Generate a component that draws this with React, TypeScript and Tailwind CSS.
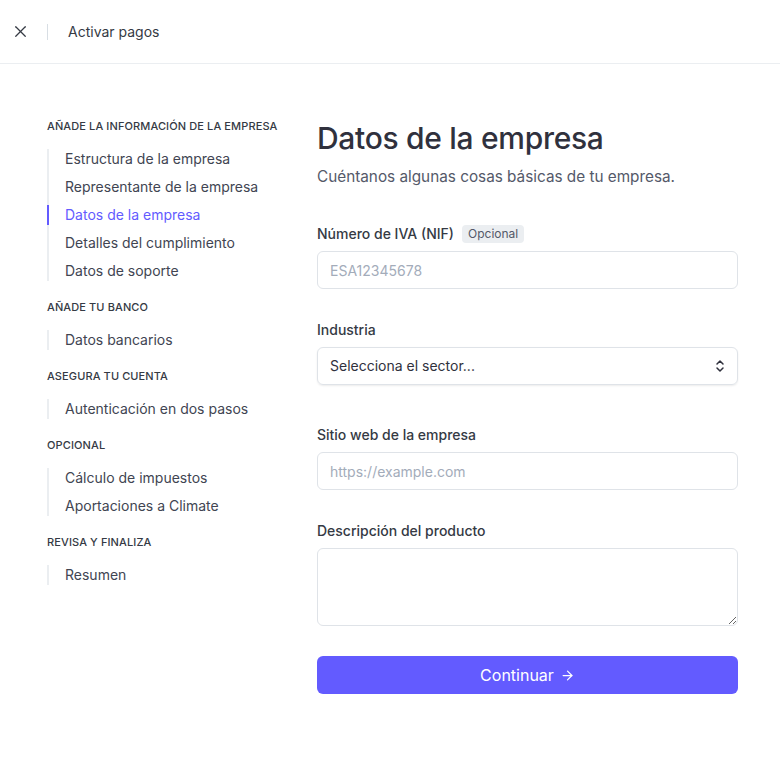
import { X, ArrowRight } from 'lucide-react'

type Section = { title: string; items: string[] }

const sections: Section[] = [
  {
    title: 'Añade la información de la empresa',
    items: [
      'Estructura de la empresa',
      'Representante de la empresa',
      'Datos de la empresa',
      'Detalles del cumplimiento',
      'Datos de soporte',
    ],
  },
  { title: 'Añade tu banco', items: ['Datos bancarios'] },
  { title: 'Asegura tu cuenta', items: ['Autenticación en dos pasos'] },
  { title: 'Opcional', items: ['Cálculo de impuestos', 'Aportaciones a Climate'] },
  { title: 'Revisa y finaliza', items: ['Resumen'] },
]

const active = 'Datos de la empresa'

function Sidebar() {
  return (
    <nav className="w-[270px] shrink-0 flex flex-col gap-[18px]">
      {sections.map((s) => (
        <div key={s.title}>
          <h3 className="text-[11px] leading-4 font-medium uppercase tracking-[0.01em] text-[#353a44]">
            {s.title}
          </h3>
          <ul className="mt-[15px] flex flex-col gap-2 border-l-2 border-[#ebeef1]">
            {s.items.map((item) => (
              <li
                key={item}
                className={
                  item === active
                    ? '-ml-[2px] border-l-2 border-[#635bff] pl-4 text-sm leading-5 text-[#635bff]'
                    : 'pl-4 text-sm leading-5 text-[#414552]'
                }
              >
                {item}
              </li>
            ))}
          </ul>
        </div>
      ))}
    </nav>
  )
}

function Label({ children }: { children: React.ReactNode }) {
  return <label className="flex items-center gap-2 text-sm leading-5 font-medium text-[#353a44]">{children}</label>
}

export default function App() {
  return (
    <div className="min-h-[774px] w-[780px] bg-white font-['Inter',sans-serif] text-[#30313d]">
      {/* cabecera */}
      <header className="h-16 flex items-center border-b border-[#ebeef1]">
        <div className="w-[47px] flex pl-[11px]">
          <X size={19} strokeWidth={1.6} className="text-[#353a44]" />
        </div>
        <div className="h-4 w-px bg-[#d8dee4]" />
        <span className="ml-5 text-sm text-[#353a44]">Activar pagos</span>
      </header>

      <div className="flex pl-[47px] pt-[54px]">
        <Sidebar />

        {/* formulario */}
        <main className="w-[421px] mt-[2px]">
          <h1 className="text-[30px] leading-9 font-medium text-[#30313d] tracking-[-0.01em]">Datos de la empresa</h1>
          <p className="mt-[9px] text-[15.3px] leading-6 text-[#545969]">Cuéntanos algunas cosas básicas de tu empresa.</p>

          <div className="mt-[35px]">
            <Label>
              Número de IVA (NIF)
              <span className="rounded bg-[#ebeef1] px-1.5 text-xs leading-[18px] font-normal text-[#545969]">Opcional</span>
            </Label>
            <input
              placeholder="ESA12345678"
              className="mt-[7px] h-[38px] w-full rounded-md border border-[#dfe3e8] px-3 text-sm text-[#30313d] placeholder:text-[#a3acba] outline-none"
            />
          </div>

          <div className="mt-[31px]">
            <Label>Industria</Label>
            <button className="mt-[7px] h-[38px] w-full rounded-md border border-[#dfe3e8] px-3 flex items-center justify-between shadow-[0_1px_2px_rgba(0,0,0,0.08)]">
              <span className="text-sm text-[#30313d]">Selecciona el sector...</span>
              <svg width="10" height="14" viewBox="0 0 10 14" fill="none" stroke="#30313d" strokeWidth="1.5" strokeLinecap="round" strokeLinejoin="round">
                <path d="M2 5l3-3 3 3" />
                <path d="M2 9l3 3 3-3" />
              </svg>
            </button>
          </div>

          <div className="mt-10">
            <Label>Sitio web de la empresa</Label>
            <input
              placeholder="https://example.com"
              className="mt-[7px] h-[38px] w-full rounded-md border border-[#dfe3e8] px-3 text-sm text-[#30313d] placeholder:text-[#a3acba] outline-none"
            />
          </div>

          <div className="mt-[31px]">
            <Label>Descripción del producto</Label>
            <textarea className="mt-[7px] block h-[78px] w-full rounded-md border border-[#dfe3e8] px-3 py-2 text-sm outline-none resize-y" />
          </div>

          <button className="mt-[30px] h-[38px] w-full rounded-md bg-[#635bff] flex items-center justify-center gap-1.5 text-base text-white">
            Continuar
            <ArrowRight size={15} strokeWidth={2} />
          </button>
        </main>
      </div>
    </div>
  )
}
